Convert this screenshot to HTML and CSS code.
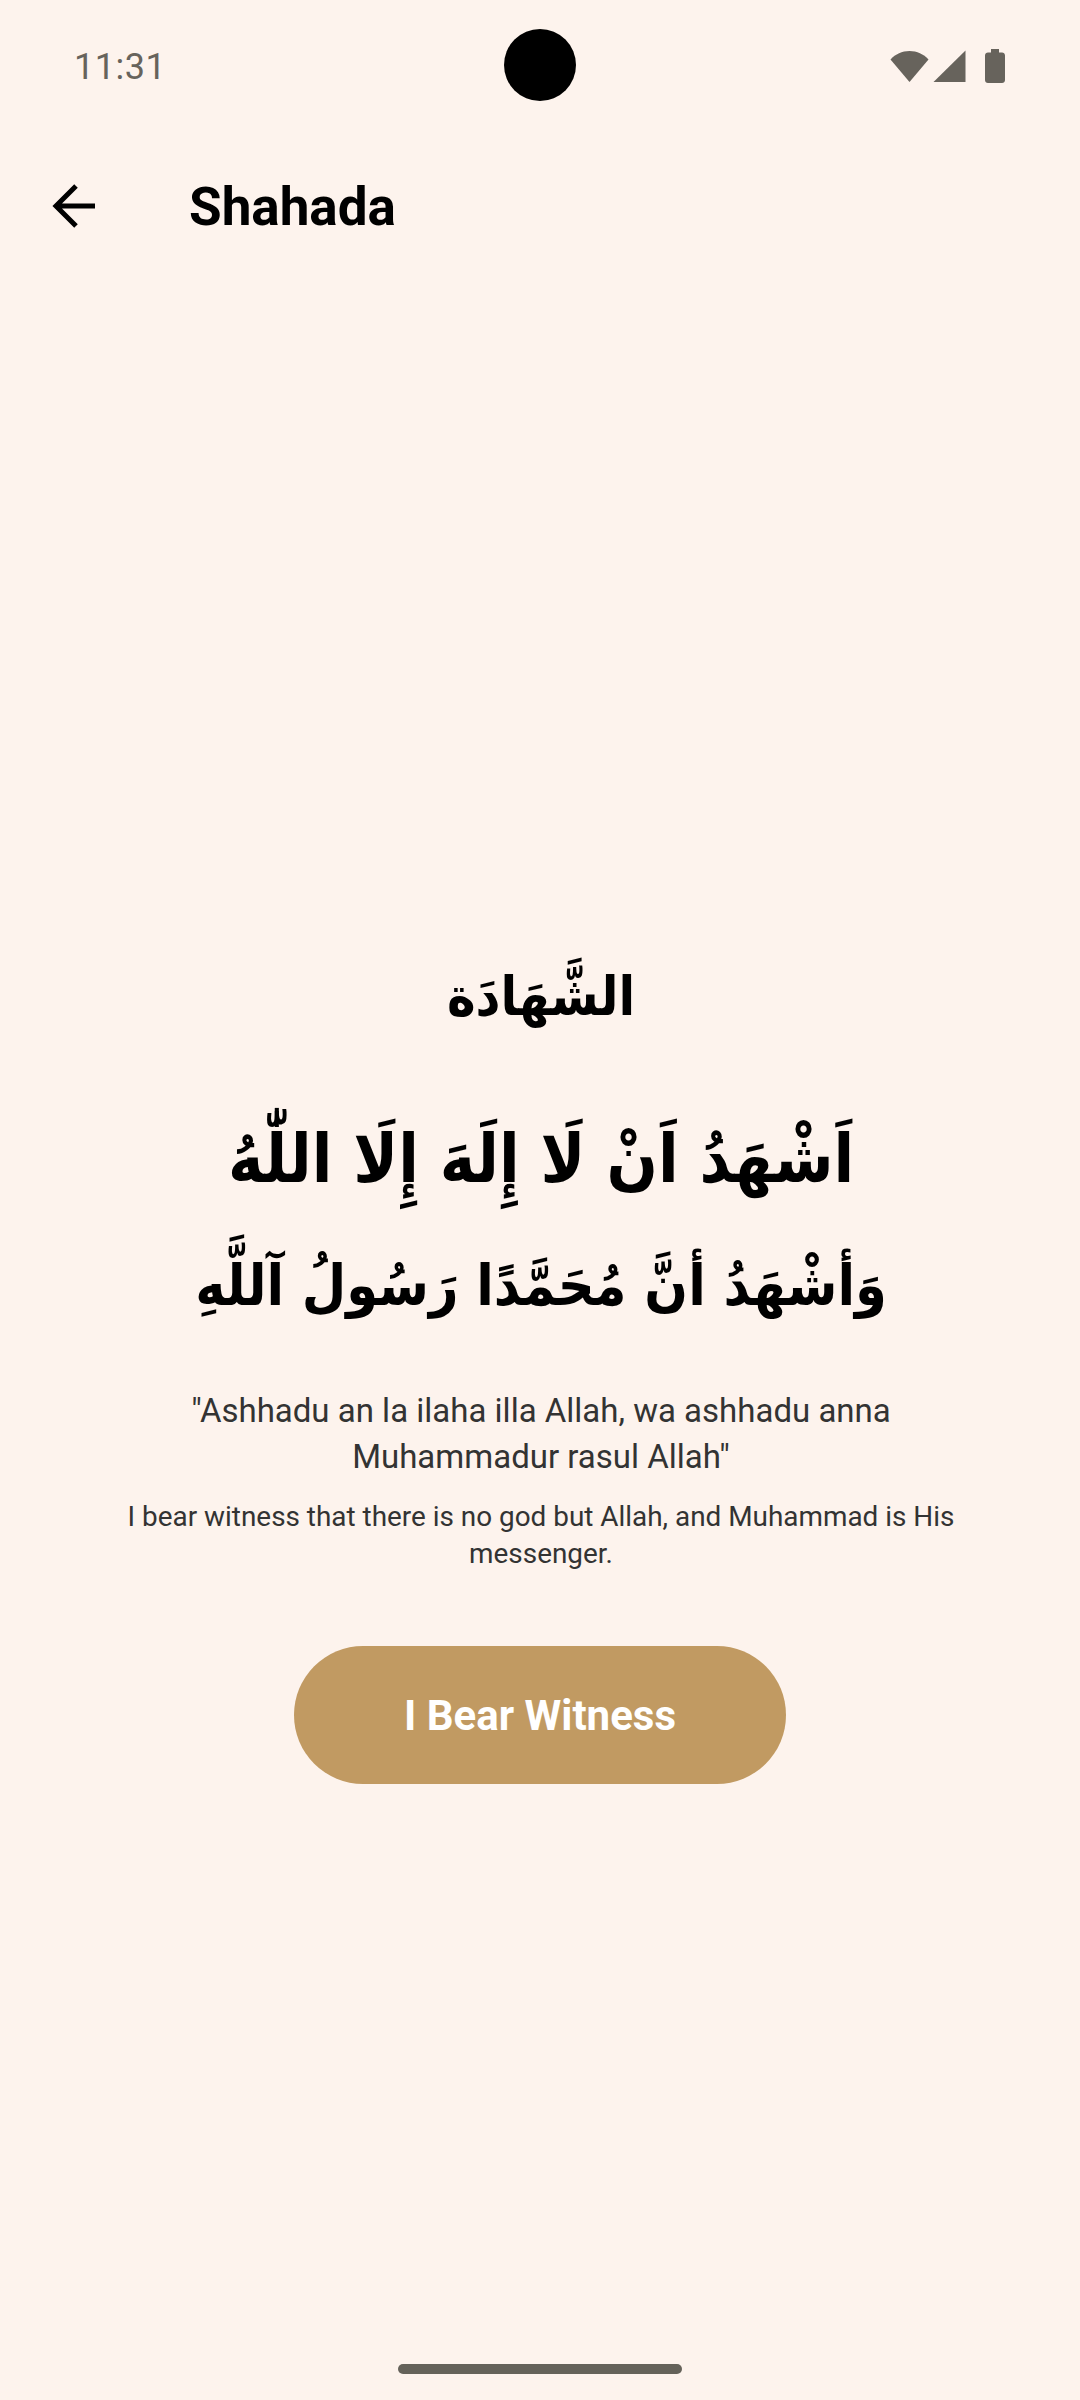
FILE: index.html
```html
<!DOCTYPE html>
<html lang="en">
<head>
  <meta charset="UTF-8">
  <meta name="viewport" content="width=device-width, initial-scale=1.0">
  <title>Shahada</title>
  <link rel="stylesheet" href="styles.css">
</head>
<body>
  <div class="screen">
    <div class="status-bar">
      <span class="clock">11:31</span>
      <div class="camera"></div>
      <div class="status-icons">
        <svg class="icon-wifi" width="40" height="32" viewBox="0 0 40 32"><path d="M0.5 9.5C5.5 4 12 1 19.5 1S33.500 4 38.500 9.500L19.500 32Z"/></svg>
        <svg class="icon-signal" width="33" height="32" viewBox="0 0 33 32"><path d="M32.500 0.500V32H0.500Z"/></svg>
        <svg class="icon-battery" width="20" height="34" viewBox="0 0 20 34"><path d="M6 0H14V3.500H17C18.700 3.500 20 4.800 20 6.500V31C20 32.700 18.700 34 17 34H3C1.300 34 0 32.700 0 31V6.500C0 4.800 1.300 3.500 3 3.500H6Z"/></svg>
      </div>
    </div>

    <header class="app-bar">
      <svg class="back-icon" width="48" height="48" viewBox="0 0 48 48"><path d="M45 24H6M26 4L6 24L26 44" fill="none" stroke="#000" stroke-width="5"/></svg>
      <h1 class="title">Shahada</h1>
    </header>

    <main class="content">
      <h2 class="arabic-heading" lang="ar" dir="rtl">الشَّهَادَة</h2>
      <p class="arabic-line first" lang="ar" dir="rtl">اَشْهَدُ اَنْ لَا إِلَهَ إِلَا اللّٰهُ</p>
      <p class="arabic-line second" lang="ar" dir="rtl">وَأشْهَدُ أنَّ مُحَمَّدًا رَسُولُ آللَّهِ</p>
      <p class="transliteration">"Ashhadu an la ilaha illa Allah, wa ashhadu anna Muhammadur rasul Allah"</p>
      <p class="translation">I bear witness that there is no god but Allah, and Muhammad is His messenger.</p>
      <button class="witness-btn">I Bear Witness</button>
    </main>

    <div class="home-bar"></div>
  </div>
</body>
</html>
```

FILE: styles.css
```css
html, body {
  margin: 0;
  padding: 0;
}
body {
  background-color: #fdf3ed;
  font-family: Roboto, sans-serif;
}
.screen {
  width: 1080px;
  height: 2400px;
  display: flex;
  flex-direction: column;
  overflow: hidden;
}

/* status bar */
.status-bar {
  height: 132px;
  padding: 0 75px;
  display: flex;
  align-items: center;
  justify-content: space-between;
  position: relative;
  box-sizing: border-box;
}
.clock {
  font-size: 36px;
  color: #67635c;
  letter-spacing: 0.5px;
  margin: 2px 0 0 -1px;
}
.camera {
  position: absolute;
  left: 504px;
  top: 29px;
  width: 72px;
  height: 72px;
  border-radius: 50%;
  background-color: #000;
}
.status-icons {
  display: flex;
  align-items: center;
  gap: 3px;
}
.status-icons svg {
  fill: #67635c;
  display: block;
}
.icon-battery {
  margin-left: 16px;
}

/* top bar */
.app-bar {
  height: 150px;
  padding-left: 50px;
  display: flex;
  align-items: center;
}
.back-icon {
  margin-top: -3px;
}
.title {
  margin: 0 0 0 91px;
  font-size: 53px;
  font-weight: 700;
  color: #000;
}

/* centered body */
.content {
  padding: 0 100px;
  margin-top: 665px;
  display: flex;
  flex-direction: column;
  align-items: center;
  text-align: center;
}
.arabic-heading,
.arabic-line {
  margin: 0;
  padding-left: 2px;
  font-family: "DejaVu Sans Condensed", "DejaVu Sans", sans-serif;
  font-weight: 700;
  color: #000;
  white-space: nowrap;
}
.arabic-heading {
  font-size: 54px;
  line-height: 100px;
}
.arabic-line.first {
  font-size: 67px;
  line-height: 120px;
  margin-top: 52px;
}
.arabic-line.second {
  font-size: 57px;
  line-height: 120px;
  margin-top: 6px;
}
.transliteration {
  margin: 43px 0 0;
  padding-left: 2px;
  font-size: 33px;
  line-height: 46px;
  color: #333;
}
.translation {
  margin: 18px 0 0;
  padding-left: 2px;
  font-size: 27.9px;
  line-height: 37px;
  color: #333;
}
.witness-btn {
  margin-top: 74px;
  width: 492px;
  height: 138px;
  border: none;
  border-radius: 69px;
  background-color: #c19a62;
  color: #fff;
  font-family: Roboto, sans-serif;
  font-size: 42px;
  font-weight: 700;
}

.home-bar {
  margin: auto auto 26px;
  width: 284px;
  height: 10px;
  border-radius: 5px;
  background-color: #65625a;
}
```
